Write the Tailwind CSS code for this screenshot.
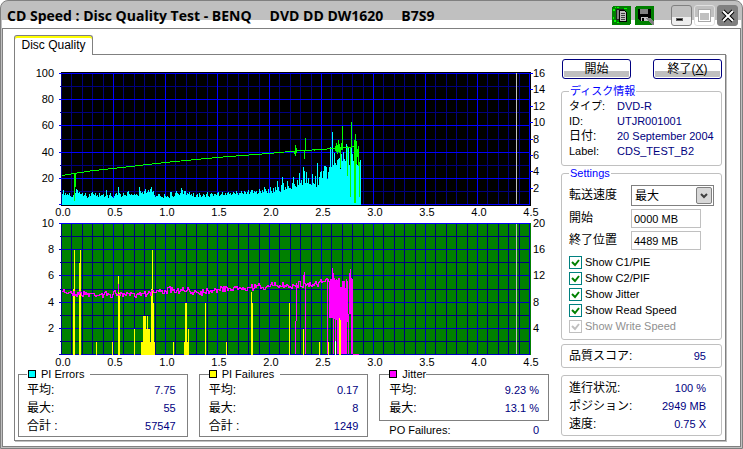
<!DOCTYPE html>
<html lang="ja">
<head>
    <meta charset="UTF-8" />
    <meta name="viewport" content="width=device-width, initial-scale=1.0" />
    <title>CD Speed : Disc Quality Test</title>
    <script src="https://cdn.jsdelivr.net/npm/@tailwindcss/browser@4"></script>
</head>
<body class="bg-white font-['Liberation_Sans','Noto_Sans_CJK_JP',sans-serif] text-[12px] leading-[15px] text-black">
    <div class="flex min-h-screen flex-col rounded-t-lg border border-[#808080] bg-[#c0c0c0] p-px">
        <!-- Title bar -->
        <header class="flex h-[26px] items-center rounded-t-md bg-linear-to-b from-[#c0c0c0] from-70% to-white to-70% pr-[3px] pl-[5px]">
            <h1 class="flex flex-1 gap-[18px] font-['Open_Sans','Liberation_Sans',sans-serif] text-[14px] font-bold whitespace-nowrap">
                <span>CD Speed : Disc Quality Test - BENQ</span>
                <span>DVD DD DW1620</span>
                <span>B7S9</span>
            </h1>
            <div class="flex items-center gap-[4px] pt-px">
                <button aria-label="Copy" class="size-[19px]">
                    <svg viewBox="0 0 19 19" class="size-[19px]" shape-rendering="crispEdges">
                        <rect width="19" height="19" rx="2" fill="#008000" />
                        <path d="M1 3h2v2h-2zM5 1h2v1h-2zM2 14h2v2h-2zM12 2h3v1h-3zM5 16h2v1h-2zM3 1h1v1h-1zM1 11h1v2h-1z" fill="#00ff00" />
                        <path d="M4.500 3.500h7v10h-7z" fill="#808080" stroke="#202020" />
                        <path d="M7.500 4.500h5l2 2v9h-7z" fill="#c0c0c0" stroke="#000" />
                        <path d="M9 7.500h4M9 9.500h4M9 11.500h4M9 13.500h4" stroke="#404040" />
                    </svg>
                </button>
                <button aria-label="Save" class="size-[19px]">
                    <svg viewBox="0 0 19 19" class="size-[19px]" shape-rendering="crispEdges">
                        <rect width="19" height="19" rx="2" fill="#008000" />
                        <path d="M3 3h13v12h-11l-2-2z" fill="#000" />
                        <path d="M5 3h8v5h-8z" fill="#808080" />
                        <path d="M6 11h7v4h-7z" fill="#c0c0c0" />
                        <path d="M7 12h2v3h-2z" fill="#000" />
                        <path d="M11 12h4l4 4v3h-2z" fill="#808080" />
                    </svg>
                </button>
                <div class="ml-[13px] flex gap-[2px]">
                    <button aria-label="Minimize" class="flex h-[21px] w-[21px] items-end rounded-[3px] border border-[#808080] bg-linear-to-b from-[#c0c0c0] from-60% to-[#eeeeee] to-60% pb-[4px] pl-[4px]">
                        <span class="h-[3px] w-[7px] border border-[#606060] bg-black"></span>
                    </button>
                    <button aria-label="Maximize" class="flex h-[21px] w-[21px] items-center justify-center rounded-[3px] border border-[#e0e0e0] bg-linear-to-b from-[#c0c0c0] from-60% to-white to-60%">
                        <span class="h-[11px] w-[11px] border border-t-3 border-white bg-[#c0c0c0] outline outline-[#a8a8a8]"></span>
                    </button>
                    <button aria-label="Close" class="flex h-[21px] w-[21px] items-center justify-center rounded-[3px] border border-[#808080] bg-[#808080]">
                        <svg viewBox="0 0 14 14" class="size-[14px]">
                            <path d="M2 2L12 12M12 2L2 12" stroke="#000" stroke-width="4" />
                            <path d="M2 2L12 12M12 2L2 12" stroke="#fff" stroke-width="2" />
                        </svg>
                    </button>
                </div>
            </div>
        </header>

        <main class="flex flex-1 flex-col border border-[#808080] bg-white pt-[6px] pr-[14px] pb-[5px] pl-[11px]">
            <div role="tablist" class="relative -mb-px flex">
                <button role="tab" aria-selected="true" class="h-[20px] w-[79px] rounded-t-[3px] border border-b-0 border-[#808080] bg-white shadow-[inset_0_2px_0_#ffff00]">Disc Quality</button>
            </div>
            <div class="flex flex-1 gap-[12px] border border-[#808080] px-[3px] pb-px shadow-[1px_1px_0_#c0c0c0]">
                <!-- Charts and totals -->
                <section class="min-w-0 flex-1 pt-[11px]">
                    <svg id="charts" viewBox="18 66 531 301" class="block w-full overflow-visible text-[11px]" shape-rendering="crispEdges" role="img" aria-label="Disc quality charts"></svg>
                    <div class="grid grid-cols-3 items-start gap-[11px]">
                        <fieldset class="min-w-0 border border-[#808080] px-[8px] pb-px">
                            <legend class="flex items-center gap-[5px] pr-[6px] pl-px text-[11px] leading-[14px]"><span class="size-[8px] border border-black bg-[#00ffff]"></span>PI Errors</legend>
                            <dl class="grid grid-cols-[auto_1fr] leading-[18px]">
                                <dt>平均:</dt><dd class="pr-[3px] text-right text-[11px] text-[#000080]">7.75</dd>
                                <dt>最大:</dt><dd class="pr-[3px] text-right text-[11px] text-[#000080]">55</dd>
                                <dt>合計 :</dt><dd class="pr-[3px] text-right text-[11px] text-[#000080]">57547</dd>
                            </dl>
                        </fieldset>
                        <fieldset class="min-w-0 border border-[#808080] px-[9px] pb-px">
                            <legend class="flex items-center gap-[5px] pr-[6px] text-[11px] leading-[14px]"><span class="size-[8px] border border-black bg-[#ffff00]"></span>PI Failures</legend>
                            <dl class="grid grid-cols-[auto_1fr] leading-[18px]">
                                <dt>平均:</dt><dd class="text-right text-[11px] text-[#000080]">0.17</dd>
                                <dt>最大:</dt><dd class="text-right text-[11px] text-[#000080]">8</dd>
                                <dt>合計 :</dt><dd class="text-right text-[11px] text-[#000080]">1249</dd>
                            </dl>
                        </fieldset>
                        <div class="min-w-0">
                            <fieldset class="border border-[#808080] px-[9px] pb-[3px]">
                                <legend class="flex items-center gap-[5px] text-[11px] leading-[14px]"><span class="size-[8px] border border-black bg-[#ff00ff]"></span>Jitter</legend>
                                <dl class="grid grid-cols-[auto_1fr] leading-[18px]">
                                    <dt>平均:</dt><dd class="text-right text-[11px] text-[#000080]">9.23 %</dd>
                                    <dt>最大:</dt><dd class="text-right text-[11px] text-[#000080]">13.1 %</dd>
                                </dl>
                            </fieldset>
                            <dl class="flex justify-between px-[10px] text-[11px] leading-[18px]">
                                <dt>PO Failures:</dt><dd class="text-[#000080]">0</dd>
                            </dl>
                        </div>
                    </div>
                </section>

                <!-- Side panel -->
                <aside class="w-[161px] shrink-0 pt-[4px]">
                    <div class="flex justify-between pl-px">
                        <button class="h-[20px] w-[69px] rounded-[3px] border border-[#000080] bg-linear-to-b from-white from-60% to-[#c0c0c0] to-60% leading-[16px] shadow-[inset_0_0_0_1px_#ffffff]">開始</button>
                        <button class="h-[20px] w-[69px] rounded-[3px] border border-[#000080] bg-linear-to-b from-white from-60% to-[#c0c0c0] to-60% leading-[16px] shadow-[inset_0_0_0_1px_#ffffff]">終了(<u>X</u>)</button>
                    </div>
                    <fieldset class="mt-[5px] min-w-0 rounded-[3px] border border-[#c0c0c0] px-[7px] pb-[6px]">
                        <legend class="px-px text-[11px] leading-[15px] text-[#0000ff]">ディスク情報</legend>
                        <dl class="grid grid-cols-[48px_1fr] text-[11px] whitespace-nowrap">
                            <dt>タイプ:</dt><dd class="text-[#000080]">DVD-R</dd>
                            <dt>ID:</dt><dd class="text-[#000080]">UTJR001001</dd>
                            <dt class="text-[12px]">日付:</dt><dd class="text-[#000080]">20 September 2004</dd>
                            <dt>Label:</dt><dd class="text-[#000080]">CDS_TEST_B2</dd>
                        </dl>
                    </fieldset>
                    <fieldset class="min-w-0 rounded-[3px] border border-[#c0c0c0] px-[7px] pb-[5px]">
                        <legend class="px-px text-[11px] leading-[15px] text-[#0000ff]">Settings</legend>
                        <div class="grid grid-cols-[62px_1fr] items-center gap-y-[3px] pt-[4px]">
                            <label for="speed">転送速度</label>
                            <div class="relative w-[83px]">
                                <select id="speed" class="block h-[21px] w-full appearance-none border border-[#808080] bg-white pl-[3px] leading-[18px]"><option>最大</option></select>
                                <span class="pointer-events-none absolute top-[2px] right-[2px] flex h-[17px] w-[16px] items-center justify-center rounded-[2px] border border-[#808080] bg-[#d8d8d8]">
                                    <svg viewBox="0 0 8 6" class="h-[6px] w-[8px]"><path d="M1 1l3 3l3-3" fill="none" stroke="#404040" stroke-width="2" /></svg>
                                </span>
                            </div>
                            <label for="from">開始</label>
                            <input id="from" type="text" value="0000 MB" class="h-[19px] w-[70px] border border-[#c0c0c0] pl-[2px] text-[11px]" />
                            <label for="to">終了位置</label>
                            <input id="to" type="text" value="4489 MB" class="h-[19px] w-[70px] border border-[#c0c0c0] pl-[2px] text-[11px]" />
                        </div>
                        <div class="pt-[4px] text-[11px] leading-[16px]">
                            <label class="flex items-center gap-[3px]"><input type="checkbox" checked class="size-[13px] appearance-none border border-[#008080]" /><svg viewBox="0 0 13 13" class="-ml-[16px] size-[13px]"><path d="M3 6l3 3l4-5" fill="none" stroke="#008000" stroke-width="2" /></svg>Show C1/PIE</label>
                            <label class="flex items-center gap-[3px]"><input type="checkbox" checked class="size-[13px] appearance-none border border-[#008080]" /><svg viewBox="0 0 13 13" class="-ml-[16px] size-[13px]"><path d="M3 6l3 3l4-5" fill="none" stroke="#008000" stroke-width="2" /></svg>Show C2/PIF</label>
                            <label class="flex items-center gap-[3px]"><input type="checkbox" checked class="size-[13px] appearance-none border border-[#008080]" /><svg viewBox="0 0 13 13" class="-ml-[16px] size-[13px]"><path d="M3 6l3 3l4-5" fill="none" stroke="#008000" stroke-width="2" /></svg>Show Jitter</label>
                            <label class="flex items-center gap-[3px]"><input type="checkbox" checked class="size-[13px] appearance-none border border-[#008080]" /><svg viewBox="0 0 13 13" class="-ml-[16px] size-[13px]"><path d="M3 6l3 3l4-5" fill="none" stroke="#008000" stroke-width="2" /></svg>Show Read Speed</label>
                            <label class="flex items-center gap-[3px] text-[#909090]"><input type="checkbox" checked disabled class="size-[13px] appearance-none border border-[#c0c0c0]" /><svg viewBox="0 0 13 13" class="-ml-[16px] size-[13px]"><path d="M3 6l3 3l4-5" fill="none" stroke="#c0c0c0" stroke-width="2" /></svg>Show Write Speed</label>
                        </div>
                    </fieldset>
                    <dl class="mt-[4px] flex justify-between rounded-[3px] border border-[#c0c0c0] pr-[15px] pl-[7px] leading-[22px]">
                        <dt>品質スコア:</dt><dd class="text-[11px] text-[#000080]">95</dd>
                    </dl>
                    <dl class="mt-[7px] grid grid-cols-[auto_1fr] rounded-[3px] border border-[#c0c0c0] pt-[3px] pb-[2px] pr-[15px] pl-[7px] leading-[18px]">
                        <dt>進行状況:</dt><dd class="text-right text-[11px] text-[#000080]">100 %</dd>
                        <dt>ポジション:</dt><dd class="text-right text-[11px] text-[#000080]">2949 MB</dd>
                        <dt>速度:</dt><dd class="text-right text-[11px] text-[#000080]">0.75 X</dd>
                    </dl>
                </aside>
            </div>
        </main>
    </div>

    <script>
        var svg = document.getElementById('charts');
        var X0 = 61;

        function add(name, attrs, text) {
            var el = document.createElementNS('http://www.w3.org/2000/svg', name);
            for (var k in attrs) el.setAttribute(k, attrs[k]);
            if (text !== undefined) el.textContent = text;
            svg.appendChild(el);
        }
        function rect(x, y, w, h, fill) {
            add('rect', { x: x, y: y, width: w, height: h, fill: fill });
        }
        function label(x, y, text, anchor) {
            add('text', { x: x, y: y, 'text-anchor': anchor || 'start', fill: '#000' }, text);
        }
        function grid(top, minor, major) {
            var i;
            for (i = 1; i < 45; i++) if (i % 5) rect(Math.round(X0 + i * 10.4), top, 1, 131, minor);
            for (i = 1; i < 10; i += 2) rect(60, Math.round(top + i * 13.1), 470, 1, minor);
            for (i = 0; i <= 9; i++) rect(X0 + i * 52, top, 1, 132, i ? major : minor);
            for (i = 0; i <= 10; i += 2) rect(59, Math.round(top + i * 13.1), 471, 1, major);
            rect(516, top, 1, 131, '#c0c0c0');
        }
        function xLabels(y) {
            for (var i = 0; i <= 9; i++) label(63 + i * 52, y, (i / 2).toFixed(1), 'middle');
        }

        // PI errors, one bar per pixel column
        var pie = [11,15,10,12,10,11,10,12,9,8,8,10,14,12,16,15,12,13,11,11,12,9,10,12,9,7,8,11,9,12,13,11,
            10,12,11,9,10,8,12,9,10,10,11,8,9,15,10,7,10,12,9,8,7,9,11,12,10,18,12,11,8,9,12,10,10,9,
            13,14,13,11,10,11,10,10,11,10,11,10,9,18,14,12,13,11,14,16,12,13,15,13,16,18,13,14,10,8,9,9,11,11,
            9,8,9,8,7,11,9,8,9,8,7,13,13,9,8,9,12,14,12,11,10,12,17,15,11,14,14,10,12,11,
            13,10,11,9,12,8,11,8,10,11,8,12,10,8,9,11,10,8,11,13,9,8,11,12,11,9,11,11,10,12,
            13,9,10,11,13,10,10,12,10,12,13,9,11,12,10,11,13,12,11,14,12,10,12,12,14,12,11,14,13,11,
            13,15,11,13,15,15,12,14,13,14,11,12,16,14,12,18,15,13,18,16,14,12,16,12,18,14,12,17,13,18,
            15,24,18,14,13,20,28,22,15,18,16,24,19,17,17,16,22,28,21,20,19,18,25,20,32,22,25,20,38,34,
            22,33,22,27,21,21,20,31,22,21,29,18,42,20,28,33,34,27,34,39,39,38,26,50,33,38,58,38,73,40,
            52,42,40,45,46,47,36,51,44,53,46,44,61,46,58,40,36,58,51,44,62,50,55,40,42,40,45,28];
        rect(X0, 72, 470, 134, '#000');
        grid(73, '#000080', '#0000ff');
        var scale = 299 / pie.length;
        for (var c = 0; c < 299; c++) {
            var h = pie[Math.floor(c / scale)];
            rect(62 + c, 205 - h, 1, h, '#00ffff');
        }

        // Read speed curve and its spikes [x, y1, y2, width]
        add('polyline', {
            points: '62,175.500 74,173.500 90,171 113,168.500 139,165.500 165,162.500 191,160 217,157.500 243,155.500 269,153.500 295,151 321,149.500 347,147.500 357,146.500',
            fill: 'none', stroke: '#00ff00', 'stroke-width': 1
        });
        [[74,173,201,1],[75,173,187,1],[294,151,154,1],[295,145,156,1],[296,148,153,1],[304,151,159,1],[305,138,151,1],
         [314,149,151,1],[335,146,151,1],[336,143,152,1],[337,145,154,1],[338,140,152,1],[339,144,153,1],[340,148,168,1],
         [341,143,150,1],[342,126,150,1],[347,146,176,1],[350,147,197,1],[351,122,148,1],[354,140,203,2],[355,134,201,1],
         [356,141,164,1],[357,149,157,1],[358,146,166,1],[359,162,197,1]].forEach(function (s) {
            rect(s[0], s[1], s[3], s[2] - s[1], '#00ff00');
        });
        for (var t = 0; t < 5; t++) label(54, 77 + Math.round(t * 26.2), 100 - t * 20, 'end');
        for (t = 0; t < 8; t++) {
            var ty = 73 + Math.round(t * 16.4);
            rect(529, ty, 4, 1, '#0000ff');
            label(533, ty + 4, 16 - t * 2);
        }
        xLabels(216);

        // Lower chart
        rect(X0, 223, 470, 132, '#008000');
        grid(223, '#000080', '#0000c0');
        rect(59, 223, 471, 1, '#0000ff');

        // PI failures [x, count, width]
        [[73,5,1],[74,8,1],[79,7,1],[80,8,1],[96,1,1],[112,1,1],[118,6,1],[119,4.7,1],[134,2,1],[141,1,2],[143,3,3],
         [146,2,1],[147,3,1],[148,2,2],[150,1,1],[151,5,1],[152,8,1],[153,4,1],[154,1,1],[173,1,1],[184,1,1],[185,4,2],
         [187,1,1],[188,2,1],[205,4,1],[226,1,1],[251,4.8,1],[252,4,1],[289,4,1],[303,2,1],[319,1,1],[328,1,1]].forEach(function (b) {
            var bh = Math.round(b[1] * 13.1);
            rect(b[0], 355 - bh, b[2], bh, '#ffff00');
        });

        // Jitter
        var base = [[62,291],[75,293],[92,294],[115,294],[140,293],[165,290],[200,291],[230,288],[269,286],[285,285],[300,284],[315,284],[329,280]];
        var seed = 7, last = 291;
        function noise() {
            seed = (seed * 16807) % 2147483647;
            return seed / 2147483647;
        }
        for (var x = 62; x < 330; x++) {
            var k = 0;
            while (k < base.length - 2 && base[k + 1][0] <= x) k++;
            var a = base[k], b = base[k + 1];
            var mid = a[1] + (b[1] - a[1]) * (x - a[0]) / (b[0] - a[0]);
            var y = Math.round(mid + (noise() + noise() - 1) * 4);
            rect(x, Math.min(y, last), 1, Math.abs(y - last) + 1, '#ff00ff');
            last = y;
        }
        [[118,284,292,1],[295,321,354,1],[296,283,321,1],[303,275,284,1],[304,272,284,1],[305,283,354,1],[327,278,354,1],
         [329,281,318,1],[330,279,318,2],[332,268,318,1],[333,273,354,1],[334,278,319,1],[335,280,354,1],[336,279,320,1],
         [337,280,354,1],[338,278,354,2],[340,287,354,2],[342,281,354,3],[345,288,354,1],[346,279,354,1],[347,281,322,1],
         [348,314,354,1],[349,273,314,1],[350,269,314,1],[351,278,354,1],[352,279,354,1],[353,354,355,6]].forEach(function (s) {
            rect(s[0], s[1], s[3], s[2] - s[1], '#ff00ff');
        });
        rect(339, 318, 1, 37, '#ffff00');
        rect(340, 320, 1, 35, '#ffff00');
        rect(335, 341, 1, 14, '#ffffff');

        for (t = 0; t < 5; t++) {
            label(54, 227 + Math.round(t * 26.2), 10 - t * 2, 'end');
            label(533, 227 + Math.round(t * 26.2), 20 - t * 4);
        }
        xLabels(366);
    </script>
</body>
</html>
